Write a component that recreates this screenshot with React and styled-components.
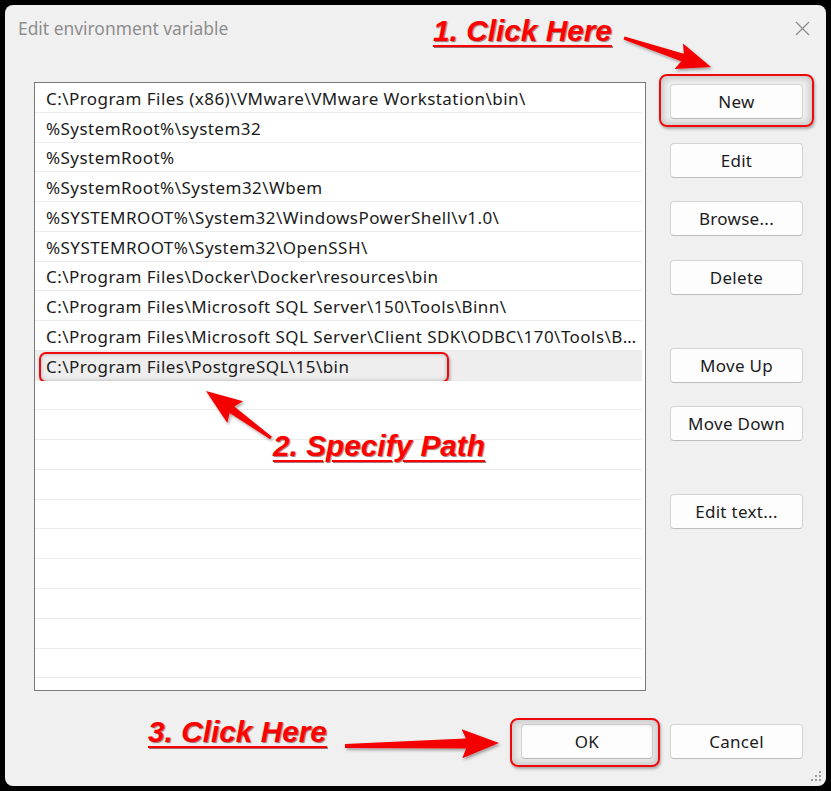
import React from "react";
import styled, { createGlobalStyle, css } from "styled-components";

const GlobalStyle = createGlobalStyle`
  html, body { margin: 0; padding: 0; background: #000; }
  body { width: 831px; height: 791px; overflow: hidden; }
  #root { position: relative; width: 831px; height: 791px; }
`;

const UI_FONT = `"Noto Sans", "Open Sans", "Liberation Sans", sans-serif`;

const Dialog = styled.div`
  position: absolute;
  left: 5px;
  top: 5px;
  width: 821px;
  height: 781px;
  background: #f0f0f0;
  border-radius: 8px;
  display: flex;
  flex-direction: column;
  font-family: ${UI_FONT};
  color: #1b1b1b;
  overflow: hidden;
`;

const TitleBar = styled.div`
  height: 77px;
  display: flex;
  align-items: flex-start;
  justify-content: space-between;
  padding: 11px 16px 0 13px;
  box-sizing: border-box;
`;

const Title = styled.div`
  font-size: 17.4px;
  color: #8d8d8d;
  line-height: 24px;
`;

const Close = styled.svg`
  width: 15px;
  height: 15px;
  margin-top: 5px;
`;

const Main = styled.div`
  display: flex;
  gap: 24px;
  padding-left: 29px;
`;

const List = styled.div`
  width: 612px;
  height: 609px;
  box-sizing: border-box;
  border: 1px solid #7a7a7a;
  background: #fff;
  overflow: hidden;
  padding-right: 3px;
`;

const Row = styled.div`
  position: relative;
  height: 29.78px;
  box-sizing: border-box;
  border-bottom: 1px solid #ececec;
  padding: 2px 2px 0 11px;
  display: flex;
  align-items: center;
  font-size: 17px;
  letter-spacing: 0.45px;
  white-space: nowrap;
  background: ${(p) => (p.$selected ? "#eeeeee" : "#fff")};
  ${(p) =>
    p.$callout &&
    css`
      &::after {
        content: "";
        position: absolute;
        left: 4px;
        top: 1px;
        width: 410px;
        bottom: -3px;
        border: 2.5px solid #ee0a0a;
        border-radius: 7px;
        box-sizing: border-box;
        box-shadow: 1px 2px 3px rgba(0, 0, 0, 0.35), inset 0 0 4px rgba(0, 0, 0, 0.25);
      }
    `}
`;

const RowText = styled.span`
  overflow: hidden;
  text-overflow: ellipsis;
  min-width: 0;
`;

const ButtonColumn = styled.div`
  display: flex;
  flex-direction: column;
  gap: 23.5px;
  margin-top: 2px;
`;

const Button = styled.div`
  position: relative;
  width: ${(p) => p.$w || 133}px;
  height: 35px;
  box-sizing: border-box;
  border: 1px solid #d3d3d3;
  border-bottom-color: #bdbdbd;
  border-radius: 4px;
  background: #fdfdfd;
  display: flex;
  align-items: center;
  justify-content: center;
  font-size: 17px;
  letter-spacing: 0.3px;
  color: #1b1b1b;
  margin-top: ${(p) => (p.$spaced ? 29.5 : 0)}px;
  ${(p) =>
    p.$callout &&
    css`
      &::after {
        content: "";
        position: absolute;
        left: ${p.$callout[0]}px;
        top: ${p.$callout[1]}px;
        right: ${p.$callout[2]}px;
        bottom: ${p.$callout[3]}px;
        border: 2.5px solid #ee0a0a;
        border-radius: 8px;
        box-sizing: border-box;
        box-shadow: 1px 2px 3px rgba(0, 0, 0, 0.3), inset 0 0 6px 3px rgba(0, 0, 0, 0.16);
      }
    `}
`;

const Footer = styled.div`
  display: flex;
  justify-content: flex-end;
  gap: 17px;
  padding: 33px 23px 0 0;
`;

const Grip = styled.div`
  position: absolute;
  right: 5px;
  bottom: 5px;
  display: grid;
  grid-template-columns: repeat(3, 2px);
  grid-template-rows: repeat(3, 2px);
  gap: 2px;
`;

const Dot = styled.span`
  width: 2px;
  height: 2px;
  background: ${(p) => (p.$on ? "#9c9c9c" : "transparent")};
`;

const Note = styled.div`
  position: absolute;
  left: ${(p) => p.$x}px;
  top: ${(p) => p.$y}px;
  font-family: "Liberation Sans", Arial, sans-serif;
  font-weight: bold;
  font-style: italic;
  font-size: 29.8px;
  line-height: 34px;
  color: #ff0000;
  text-decoration: underline;
  text-decoration-thickness: 2px;
  text-underline-offset: 4px;
  text-shadow: 1px 1px 1px rgba(90, 0, 0, 0.55);
  white-space: nowrap;
`;

const ArrowLayer = styled.svg`
  position: absolute;
  left: 0;
  top: 0;
  width: 831px;
  height: 791px;
  pointer-events: none;
`;

function arrowPoints(x1, y1, x2, y2, tailW, baseW, headLen, headW) {
  const dx = x2 - x1;
  const dy = y2 - y1;
  const L = Math.hypot(dx, dy);
  const ux = dx / L;
  const uy = dy / L;
  const nx = -uy;
  const ny = ux;
  const bx = x2 - ux * headLen;
  const by = y2 - uy * headLen;
  const pts = [
    [x1 + (nx * tailW) / 2, y1 + (ny * tailW) / 2],
    [bx + (nx * baseW) / 2, by + (ny * baseW) / 2],
    [bx - ux * 4 + (nx * headW) / 2, by - uy * 4 + (ny * headW) / 2],
    [x2, y2],
    [bx - ux * 4 - (nx * headW) / 2, by - uy * 4 - (ny * headW) / 2],
    [bx - (nx * baseW) / 2, by - (ny * baseW) / 2],
    [x1 - (nx * tailW) / 2, y1 - (ny * tailW) / 2],
  ];
  return pts.map((p) => p.map((v) => v.toFixed(1)).join(",")).join(" ");
}

const paths = [
  "C:\\Program Files (x86)\\VMware\\VMware Workstation\\bin\\",
  "%SystemRoot%\\system32",
  "%SystemRoot%",
  "%SystemRoot%\\System32\\Wbem",
  "%SYSTEMROOT%\\System32\\WindowsPowerShell\\v1.0\\",
  "%SYSTEMROOT%\\System32\\OpenSSH\\",
  "C:\\Program Files\\Docker\\Docker\\resources\\bin",
  "C:\\Program Files\\Microsoft SQL Server\\150\\Tools\\Binn\\",
  "C:\\Program Files\\Microsoft SQL Server\\Client SDK\\ODBC\\170\\Tools\\Binn\\",
  "C:\\Program Files\\PostgreSQL\\15\\bin",
];

const rows = [...paths, ...Array(11).fill("")];

export default function App() {
  return (
    <>
      <GlobalStyle />
      <Dialog>
        <TitleBar>
          <Title>Edit environment variable</Title>
          <Close viewBox="0 0 15 15">
            <path d="M1 1 L14 14 M14 1 L1 14" stroke="#8a8a8a" strokeWidth="1.2" fill="none" />
          </Close>
        </TitleBar>
        <Main>
          <List>
            {rows.map((r, i) => (
              <Row key={i} $selected={i === 9} $callout={i === 9}>
                <RowText>{r}</RowText>
              </Row>
            ))}
          </List>
          <ButtonColumn>
            <Button $callout={[-12, -11, -12, -9]}>New</Button>
            <Button>Edit</Button>
            <Button>Browse...</Button>
            <Button>Delete</Button>
            <Button $spaced>Move Up</Button>
            <Button>Move Down</Button>
            <Button $spaced>Edit text...</Button>
          </ButtonColumn>
        </Main>
        <Footer>
          <Button $w={132} $callout={[-12, -7, -8, -9]}>OK</Button>
          <Button $w={133}>Cancel</Button>
        </Footer>
        <Grip>
          {[0, 0, 1, 0, 1, 1, 1, 1, 1].map((on, i) => (
            <Dot key={i} $on={on} />
          ))}
        </Grip>
      </Dialog>
      <Note $x={433} $y={14}>1. Click Here</Note>
      <Note $x={273} $y={429}>2. Specify Path</Note>
      <Note $x={148} $y={715}>3. Click Here</Note>
      <ArrowLayer viewBox="0 0 831 791">
        <defs>
          <filter id="sh" x="-20%" y="-20%" width="140%" height="140%">
            <feDropShadow dx="1.5" dy="2" stdDeviation="1.5" floodColor="#000" floodOpacity="0.35" />
          </filter>
        </defs>
        <g fill="#f50000" filter="url(#sh)">
          <polygon points={arrowPoints(624, 38, 711, 67, 3, 8, 30, 27)} />
          <polygon points={arrowPoints(271, 438, 206, 391, 3, 8, 32, 27)} />
          <polygon points={arrowPoints(345, 746, 499, 743, 4, 10, 33, 29)} />
        </g>
      </ArrowLayer>
    </>
  );
}
